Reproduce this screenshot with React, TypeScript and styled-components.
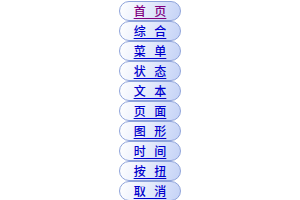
import React from "react";
import styled, { createGlobalStyle } from "styled-components";

const GlobalStyle = createGlobalStyle`
  html, body {
    margin: 0;
    padding: 0;
    background: #fff;
  }
`;

const Menu = styled.nav`
  display: flex;
  flex-direction: column;
  align-items: center;
  padding-top: 1px;
`;

const Item = styled.a<{ $visited?: boolean }>`
  box-sizing: border-box;
  display: flex;
  align-items: center;
  justify-content: center;
  width: 62px;
  height: 20px;
  border: 1px solid #8ea3da;
  border-radius: 10px;
  background: linear-gradient(110deg, #ffffff 0%, #eef2fd 30%, #c4d2f6 100%);
  font-family: "Noto Sans CJK SC", sans-serif;
  font-size: 12px;
  font-weight: 500;
  line-height: 1;
  color: ${(p) => (p.$visited ? "#800080" : "#0000cc")};
  text-decoration: underline;
  text-underline-offset: 2px;
  word-spacing: 6px;
  cursor: pointer;
`;

const items = ["首 页", "综 合", "菜 单", "状 态", "文 本", "页 面", "图 形", "时 间", "按 扭", "取 消"];

export default function App() {
  return (
    <>
      <GlobalStyle />
      <Menu>
        {items.map((t, i) => (
          <Item key={t} $visited={i === 0}>
            {t}
          </Item>
        ))}
      </Menu>
    </>
  );
}
